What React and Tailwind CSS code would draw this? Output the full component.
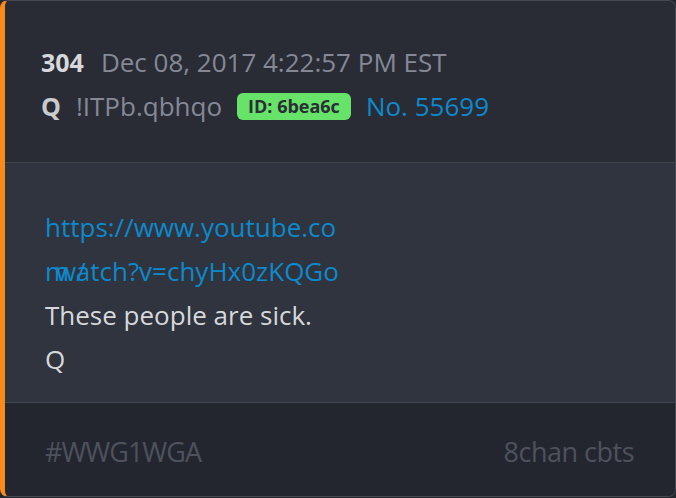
import React from 'react';

const post = {
  num: 304,
  date: 'Dec 08, 2017 4:22:57 PM EST',
  name: 'Q',
  trip: '!ITPb.qbhqo',
  id: '6bea6c',
  no: 'No. 55699',
};

const App = () => {
  return (
    <div
      className="w-[676px] h-[498px] bg-[#24272e] overflow-hidden"
      style={{ fontFamily: '"Open Sans", "Noto Sans", sans-serif' }}
    >
      <div className="h-[497px] flex flex-col rounded-lg overflow-hidden border border-[#454952] border-l-[5px] border-l-[#f98b1d]">
        {/* header */}
        <div className="bg-[#292c35] pl-[36px] pt-[39px] pb-[34px] border-b border-[#41454e]">
          <div className="flex items-center leading-[44px] text-[26px]">
            <span className="font-bold text-[25px] text-[#d7d8db]">{post.num}</span>
            <span className="ml-[17px] text-[#858995]">{post.date}</span>
          </div>
          <div className="flex items-center leading-[44px] text-[26px]">
            <span className="font-bold text-[25px] text-[#c9cacd]">{post.name}</span>
            <span className="ml-[15px] text-[#858995]">{post.trip}</span>
            <span className="ml-[15px] h-[27px] px-[11px] flex items-center rounded-[6px] bg-[#67e36a] text-[#2a2e35] text-[18px] font-bold leading-none">
              ID: {post.id}
            </span>
            <span className="ml-[15px] text-[#0d89cc]">{post.no}</span>
          </div>
        </div>

        {/* body */}
        <div className="bg-[#2f343e] pl-[40px] pt-[42px] pb-[21px] border-b border-[#41454e] text-[26px] leading-[44px]">
          <div className="text-[#0d89cc]">
            <div>https://www.youtube.co</div>
            <div>
              m<span className="-ml-[13px]">w</span>/<span className="-ml-[10px]">atch?v=chyHx0zKQGo</span>
            </div>
          </div>
          <div className="text-[#d6d8db]">These people are sick.</div>
          <div className="text-[#d6d8db]">Q</div>
        </div>

        {/* footer */}
        <div className="flex-1 bg-[#23262e] pl-[40px] pr-[41px] pt-[29px] flex justify-between text-[27px] leading-[40px] text-[#4d525d] tracking-[-1px]">
          <span>#WWG1WGA</span>
          <span className="tracking-[-0.5px]">8chan cbts</span>
        </div>
      </div>
    </div>
  );
};

export default App;
